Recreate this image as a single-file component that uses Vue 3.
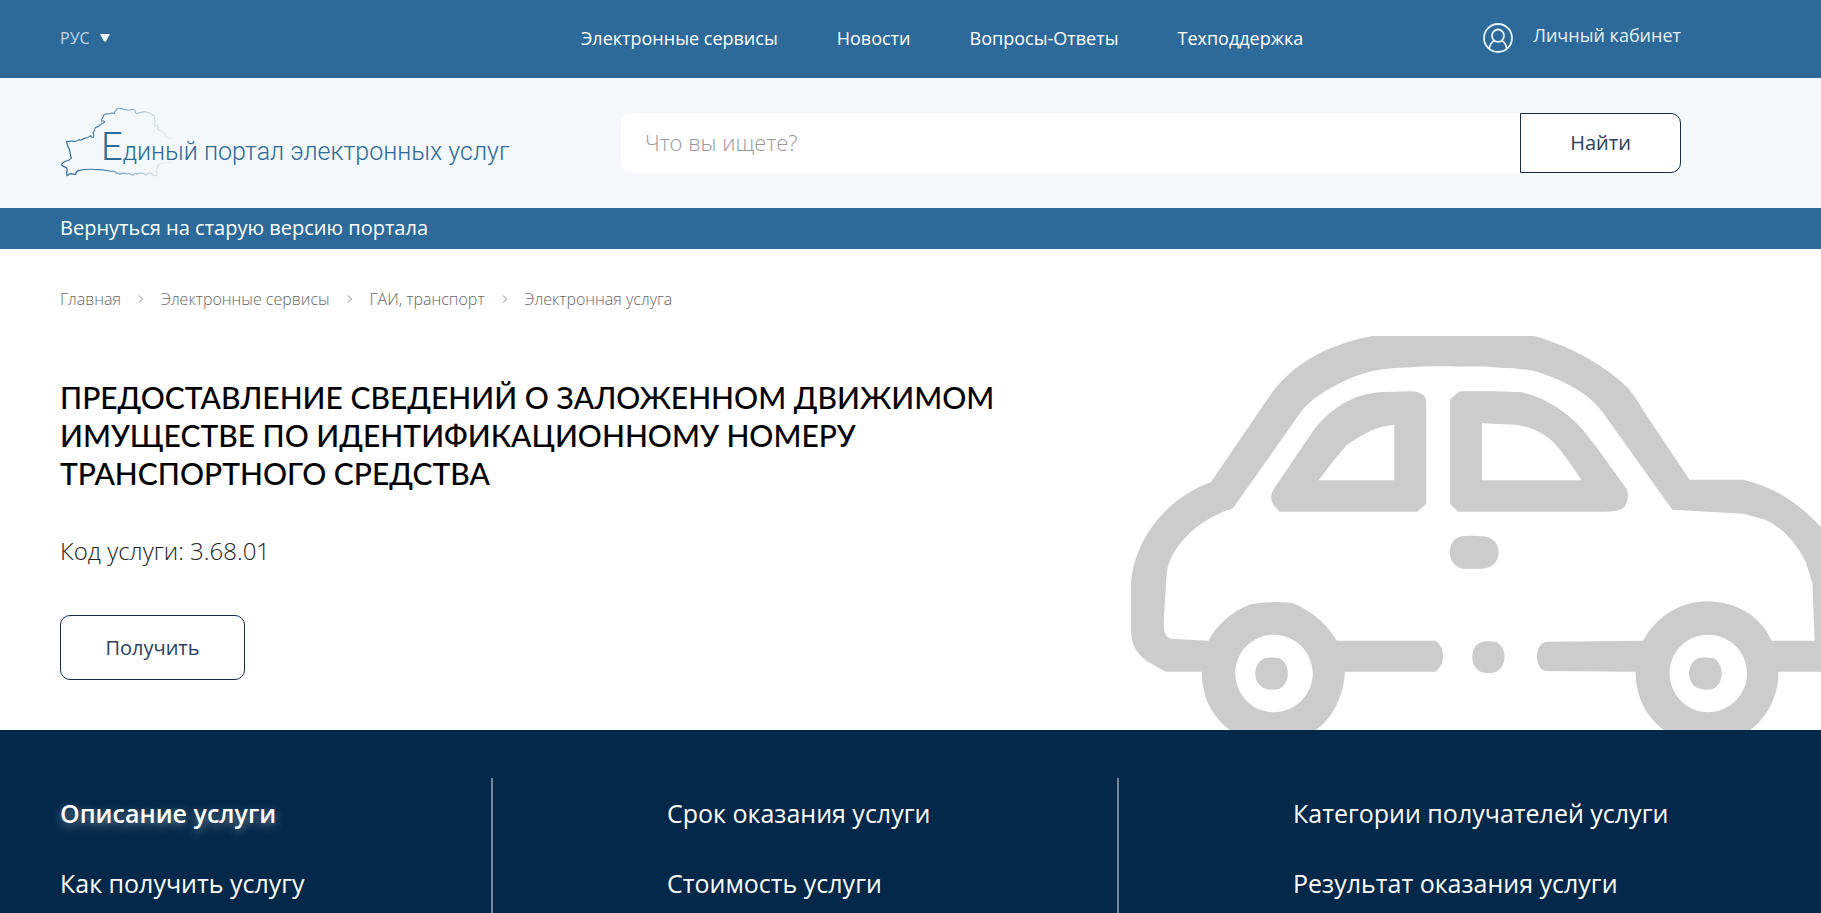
<script setup>
const navLinks = ['Электронные сервисы', 'Новости', 'Вопросы-Ответы', 'Техподдержка']

const crumbs = ['Главная', 'Электронные сервисы', 'ГАИ, транспорт', 'Электронная услуга']

const titleLines = [
  'Предоставление сведений о заложенном движимом',
  'имуществе по идентификационному номеру',
  'транспортного средства',
]

const sections = [
  [{ label: 'Описание услуги', active: true }, { label: 'Как получить услугу' }],
  [{ label: 'Срок оказания услуги' }, { label: 'Стоимость услуги' }],
  [{ label: 'Категории получателей услуги' }, { label: 'Результат оказания услуги' }],
]
</script>

<template>
  <div class="page">
    <header>
      <div class="topbar">
        <div class="lang">
          <select class="lang-select" aria-label="Язык">
            <option>РУС</option>
          </select>
          <svg class="lang-arrow" viewBox="0 0 10 8" aria-hidden="true"><path d="M0 0H10L6 7.500H4Z" fill="#eef5fb" /></svg>
        </div>
        <nav class="nav">
          <a v-for="item in navLinks" :key="item" href="#">{{ item }}</a>
        </nav>
        <a class="account" href="#">
          <svg class="account-icon" viewBox="0 0 30 30" aria-hidden="true">
            <g fill="none" stroke="#e6f2fa" stroke-width="1.8">
              <circle cx="15" cy="15" r="14" />
              <ellipse cx="15" cy="12.700" rx="6" ry="6.200" />
              <path d="M6.300 25.500C7 21 9.200 18.500 11.800 17.500M18.200 17.500C20.800 18.500 23 21 23.700 25.500" />
            </g>
          </svg>
          <span>Личный кабинет</span>
        </a>
      </div>

      <div class="searchbar">
        <a class="logo" href="#">
          <svg viewBox="0 0 451 70">
            <defs>
              <linearGradient id="outline-fade" gradientUnits="userSpaceOnUse" x1="35" y1="0" x2="365" y2="0">
                <stop offset="0" stop-color="#22608f" />
                <stop offset="0.4" stop-color="#5d8bb0" />
                <stop offset="0.8" stop-color="#c3d3df" />
                <stop offset="1" stop-color="#eef4f8" />
              </linearGradient>
            </defs>
            <g transform="translate(-11 -13) scale(0.3333)">
              <path
                fill="none"
                stroke="url(#outline-fade)"
                stroke-width="3.500"
                stroke-linejoin="round"
                d="M365 130Q355 132 352 125Q345 126 345 115Q336 113 334 107Q325 107 324 101Q330 94 322 93Q311 96 313 86Q318 78 313 70Q316 60 306 59Q298 52 285 50Q272 52 262 56Q254 56 256 47Q248 41 240 45Q233 47 228 43Q220 45 217 41Q204 37 199 45Q193 49 194 55Q183 53 176 57Q160 54 160 66Q153 73 155 78Q166 77 164 82Q154 83 151 90Q145 96 136 98Q134 108 129 114Q133 122 130 127Q124 127 122 122Q110 132 100 131Q95 137 87 134Q78 141 70 138L49 140Q54 156 59 166Q60 178 64 189Q56 199 48 198Q34 204 35 210Q40 216 49 218Q54 226 50 230L51 242Q57 239 60 236Q70 238 77 238Q78 228 87 226Q108 222 130 223Q160 223 185 229Q196 227 199 235Q206 231 210 238Q218 233 225 235Q232 238 238 235Q245 243 252 239Q256 232 262 238Q270 233 276 235Q280 232 287 240Q293 239 296 234Q306 234 308 240Q316 244 321 241Q324 234 319 228Q324 218 323 212Q330 204 340 205Q352 200 365 203"
              />
            </g>
            <text x="40" y="52" class="logo-text"><tspan class="logo-initial">Е</tspan>диный портал электронных услуг</text>
          </svg>
        </a>
        <form class="search" @submit.prevent>
          <input type="search" placeholder="Что вы ищете?" aria-label="Поиск" />
          <button type="submit">Найти</button>
        </form>
      </div>

      <div class="oldver"><a href="#">Вернуться на старую версию портала</a></div>
    </header>

    <main class="hero">
      <svg class="car" viewBox="46 48 1522 1182" preserveAspectRatio="none" aria-hidden="true">
        <g fill="#cccccc" fill-rule="evenodd">
          <path
            d="M580 48H935C1020 80 1095 140 1142 204C1160 232 1168 254 1180 280L1278 479H1395C1465 500 1520 550 1568 622V1055H1474C1474 1130 1450 1190 1412 1230H1221C1180 1185 1160 1130 1159 1055L960 1053C935 1046 935 976 960 965L1176 962C1200 900 1250 845 1316 844C1385 846 1435 890 1459 962H1554L1549 790L1535 728C1515 670 1480 620 1446 600L1398 581L1240 569L1088 280C1055 215 995 180 948 158C920 147 890 144 862 143C830 138 800 139 772 140C740 138 700 138 662 142C630 144 600 146 572 155C505 180 450 230 425 268L271 565C190 600 135 680 125 755L118 908C118 940 124 955 138 957L217 962C235 915 268 875 310 853C340 845 370 845 402 849C440 870 475 905 500 962H718C740 985 740 1030 718 1055H518C515 1130 490 1195 454 1230H264C222 1185 203 1130 202 1055H122L82 1024C55 998 46 970 46 925V790C52 670 115 540 222 487L350 232C400 130 485 70 580 48Z
               M361 944C314 944 276 996 276 1060C276 1124 314 1177 361 1177C408 1177 447 1124 447 1060C447 996 408 944 361 944Z
               M1319 944C1272 944 1234 996 1234 1060C1234 1124 1272 1177 1319 1177C1366 1177 1405 1124 1405 1060C1405 996 1366 944 1319 944Z"
          />
          <path d="M600 216L665 214C682 214 697 226 697 243V551L678 575H374L362 558C352 540 354 522 362 505L445 338C480 270 535 220 600 216ZM627 314C590 316 555 344 522 375C500 408 480 445 460 481H627Z" />
          <path d="M771 214H850L910 217C965 235 1010 280 1040 325C1075 383 1105 443 1138 505C1145 522 1142 540 1137 556Q1131 575 1090 575H768L750 553V238ZM820 310V481H1040C1020 440 1000 400 980 369C955 338 930 321 895 314Z" />
          <path d="M774 649C790 645 810 648 823 649C846 652 857 673 857 698C857 723 843 744 820 746H775C760 738 749 720 749 698C749 676 757 655 774 649Z" />
          <path d="M820 965C830 963 842 963 851 965C863 975 870 990 870 1011C870 1030 862 1047 852 1055C842 1060 826 1060 817 1055C805 1046 799 1030 799 1011C799 986 807 971 820 965Z" />
          <path d="M342 1014C352 1012 366 1012 376 1016C387 1026 392 1042 392 1061C392 1080 385 1098 374 1106C363 1110 350 1110 340 1105C327 1096 320 1080 320 1061C320 1038 329 1021 342 1014Z" />
          <path d="M1299 1014C1309 1012 1323 1012 1333 1016C1344 1026 1349 1042 1349 1061C1349 1080 1342 1098 1331 1106C1320 1110 1307 1110 1297 1105C1284 1096 1277 1080 1277 1061C1277 1038 1286 1021 1299 1014Z" />
        </g>
      </svg>

      <nav class="crumbs" aria-label="Навигация">
        <template v-for="(item, i) in crumbs" :key="item">
          <svg v-if="i > 0" viewBox="0 0 6 8" aria-hidden="true"><path d="M1 0.500L4.500 4L1 7.500" fill="none" stroke="#888" /></svg>
          <a href="#">{{ item }}</a>
        </template>
      </nav>
      <h1><span v-for="line in titleLines" :key="line">{{ line + ' ' }}</span></h1>
      <p class="code">Код услуги: 3.68.01</p>
      <button class="get" type="button">Получить</button>
    </main>

    <section class="sections">
      <ul v-for="(column, i) in sections" :key="i">
        <li v-for="item in column" :key="item.label">
          <a href="#" :class="{ active: item.active }">{{ item.label }}</a>
        </li>
      </ul>
    </section>
  </div>
</template>

<style>
body {
  margin: 0;
}
</style>

<style scoped>
.page {
  height: 100vh;
  overflow: hidden;
  display: flex;
  flex-direction: column;
  font-family: 'Open Sans', 'Noto Sans', sans-serif;
  color: #333;
  background: #fff;
}

a {
  color: inherit;
  text-decoration: none;
}

input,
button,
select {
  box-sizing: border-box;
  font-family: inherit;
}

.topbar {
  box-sizing: border-box;
  height: 78px;
  padding: 0 140px 2px 60px;
  display: grid;
  grid-template-columns: 521px 1fr auto;
  align-items: center;
  color: #fff;
  background: #2d6a9a;
  font-size: 18px;
}

.lang {
  display: flex;
  align-items: center;
  gap: 10px;
}

.lang-select {
  appearance: none;
  padding: 0;
  border: 0;
  color: #c3d6e6;
  background: transparent;
  font-size: 16px;
}

.lang-arrow {
  width: 10px;
  height: 8px;
}

.nav {
  display: flex;
  gap: 59px;
  white-space: nowrap;
}

.account {
  display: flex;
  align-items: flex-start;
  gap: 20px;
  line-height: 24px;
  color: #e6f0f8;
  white-space: nowrap;
}

.account-icon {
  width: 30px;
  height: 30px;
}

.searchbar {
  height: 130px;
  padding: 0 140px 0 61px;
  display: grid;
  grid-template-columns: 451px 1fr;
  gap: 109px;
  align-items: center;
  background: #f2f8fb;
}

.logo svg {
  display: block;
  width: 100%;
}

.logo-text {
  font-family: Roboto, 'Open Sans', sans-serif;
  font-size: 25px;
  font-weight: 300;
  fill: #2d6a9a;
}

.logo-initial {
  font-size: 38px;
}

.search {
  display: flex;
}

.search input {
  flex: 1;
  height: 60px;
  padding: 0 24px 2px;
  border: 0;
  border-radius: 10px 0 0 10px;
  background: #fff;
  font-size: 22px;
  font-weight: 300;
}

.search input::placeholder {
  color: #999;
}

.search button {
  width: 161px;
  height: 60px;
  padding-bottom: 2px;
  border: 1px solid #152d45;
  border-radius: 0 10px 10px 0;
  color: #2c405a;
  background: #fff;
  font-size: 20px;
}

.oldver {
  box-sizing: border-box;
  height: 41px;
  padding: 0 60px;
  color: #fff;
  background: #2d6a9a;
  font-size: 20px;
  line-height: 39px;
}

.hero {
  position: relative;
  padding: 35px 60px 50px;
}

.car {
  position: absolute;
  right: 0;
  bottom: 0;
  width: 690px;
  height: 394px;
}

.crumbs {
  display: flex;
  align-items: center;
  gap: 17px;
  color: #666;
  font-size: 16px;
  font-weight: 300;
  line-height: 30px;
}

.crumbs svg {
  width: 6px;
  height: 8px;
}

h1 {
  margin: 64px 0 0;
  color: #000;
  font-family: Lato, 'Open Sans', sans-serif;
  font-size: 30px;
  font-weight: 500;
  line-height: 38px;
  text-transform: uppercase;
}

h1 span {
  display: block;
}

.code {
  margin: 42px 0 0;
  color: #222;
  font-size: 24px;
  font-weight: 300;
  line-height: 34px;
}

.get {
  display: block;
  width: 185px;
  height: 65px;
  margin-top: 47px;
  border: 1px solid #152d45;
  border-radius: 10px;
  color: #2c405a;
  background: #fff;
  font-size: 20px;
}

.sections {
  flex: 1;
  padding: 48px 0 0 60px;
  display: grid;
  grid-template-columns: 431fr 626fr 704fr;
  color: #fff;
  background: #032849;
}

.sections ul {
  margin: 0;
  padding: 0 0 0 174px;
  list-style: none;
  border-left: 2px solid #728699;
  font-size: 25px;
  line-height: 70px;
  white-space: nowrap;
}

.sections ul:first-child {
  padding-left: 0;
  border-left: 0;
}

.sections a.active {
  font-weight: 600;
  text-shadow: 0 3px 10px rgba(255, 255, 255, 0.45);
}
</style>
